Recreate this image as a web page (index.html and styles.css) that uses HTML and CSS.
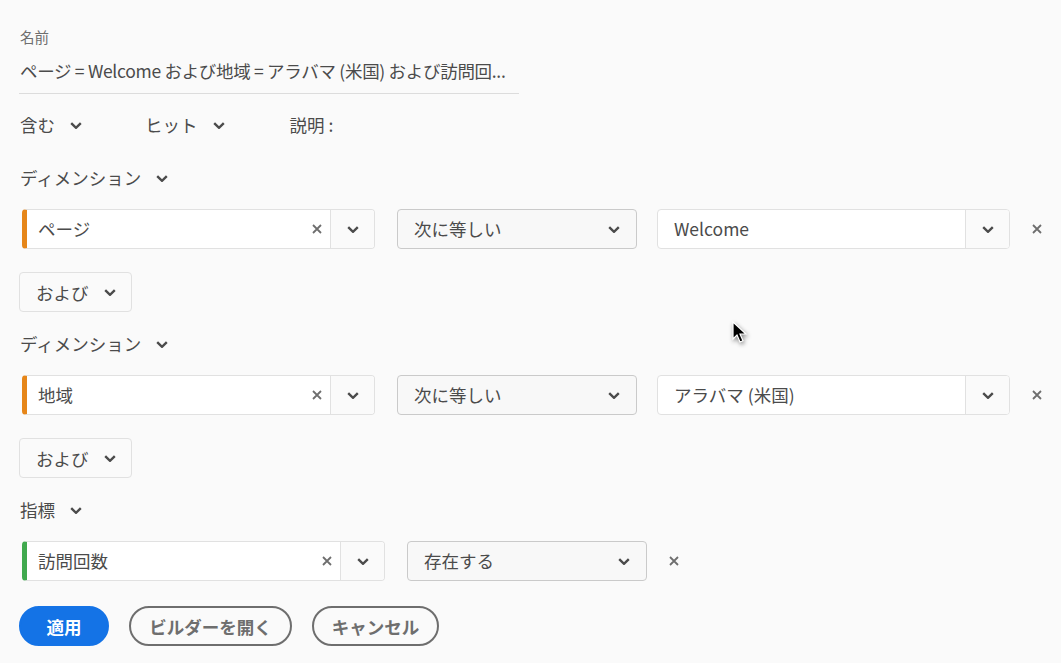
FILE: index.html
```html
<!DOCTYPE html>
<html lang="ja">
<head>
<meta charset="utf-8">
<title>Segment</title>
<link rel="stylesheet" href="styles.css">
</head>
<body>
<div class="panel">
  <div class="name-label">名前</div>
  <div class="name-value">ページ = Welcome および地域 = アラバマ (米国) および訪問回...</div>

  <div class="options">
    <div class="opt">含む<svg class="chev" viewBox="0 0 12 7"><path d="M1.2 1.2l4.8 4.6 4.8-4.6"/></svg></div>
    <div class="opt">ヒット<svg class="chev" viewBox="0 0 12 7"><path d="M1.2 1.2l4.8 4.6 4.8-4.6"/></svg></div>
    <div class="opt desc">説明 :</div>
  </div>

  <div class="section-head first">ディメンション<svg class="chev" viewBox="0 0 12 7"><path d="M1.2 1.2l4.8 4.6 4.8-4.6"/></svg></div>
  <div class="rule-row">
    <div class="combo orange">
      <span class="combo-text">ページ</span>
      <svg class="clear" viewBox="0 0 10 10"><path d="M1 1l8 8M9 1l-8 8"/></svg>
      <span class="combo-btn"><svg class="chev" viewBox="0 0 12 7"><path d="M1.2 1.2l4.8 4.6 4.8-4.6"/></svg></span>
    </div>
    <div class="select"><span>次に等しい</span><svg class="chev" viewBox="0 0 12 7"><path d="M1.2 1.2l4.8 4.6 4.8-4.6"/></svg></div>
    <div class="combo value">
      <span class="combo-text">Welcome</span>
      <span class="combo-btn"><svg class="chev" viewBox="0 0 12 7"><path d="M1.2 1.2l4.8 4.6 4.8-4.6"/></svg></span>
    </div>
    <svg class="remove" viewBox="0 0 10 10"><path d="M1 1l8 8M9 1l-8 8"/></svg>
  </div>

  <div class="and-btn">および<svg class="chev" viewBox="0 0 12 7"><path d="M1.2 1.2l4.8 4.6 4.8-4.6"/></svg></div>

  <div class="section-head">ディメンション<svg class="chev" viewBox="0 0 12 7"><path d="M1.2 1.2l4.8 4.6 4.8-4.6"/></svg></div>
  <div class="rule-row">
    <div class="combo orange">
      <span class="combo-text">地域</span>
      <svg class="clear" viewBox="0 0 10 10"><path d="M1 1l8 8M9 1l-8 8"/></svg>
      <span class="combo-btn"><svg class="chev" viewBox="0 0 12 7"><path d="M1.2 1.2l4.8 4.6 4.8-4.6"/></svg></span>
    </div>
    <div class="select"><span>次に等しい</span><svg class="chev" viewBox="0 0 12 7"><path d="M1.2 1.2l4.8 4.6 4.8-4.6"/></svg></div>
    <div class="combo value">
      <span class="combo-text">アラバマ (米国)</span>
      <span class="combo-btn"><svg class="chev" viewBox="0 0 12 7"><path d="M1.2 1.2l4.8 4.6 4.8-4.6"/></svg></span>
    </div>
    <svg class="remove" viewBox="0 0 10 10"><path d="M1 1l8 8M9 1l-8 8"/></svg>
  </div>

  <div class="and-btn">および<svg class="chev" viewBox="0 0 12 7"><path d="M1.2 1.2l4.8 4.6 4.8-4.6"/></svg></div>

  <div class="section-head">指標<svg class="chev" viewBox="0 0 12 7"><path d="M1.2 1.2l4.8 4.6 4.8-4.6"/></svg></div>
  <div class="rule-row">
    <div class="combo green wide">
      <span class="combo-text">訪問回数</span>
      <svg class="clear" viewBox="0 0 10 10"><path d="M1 1l8 8M9 1l-8 8"/></svg>
      <span class="combo-btn"><svg class="chev" viewBox="0 0 12 7"><path d="M1.2 1.2l4.8 4.6 4.8-4.6"/></svg></span>
    </div>
    <div class="select"><span>存在する</span><svg class="chev" viewBox="0 0 12 7"><path d="M1.2 1.2l4.8 4.6 4.8-4.6"/></svg></div>
    <svg class="remove" viewBox="0 0 10 10"><path d="M1 1l8 8M9 1l-8 8"/></svg>
  </div>

  <div class="actions">
    <button class="btn primary">適用</button>
    <button class="btn secondary builder">ビルダーを開く</button>
    <button class="btn secondary cancel">キャンセル</button>
  </div>
</div>

<svg class="cursor" viewBox="0 0 16 24" width="16" height="24"><path d="M1 1v17l4-4 3 7 3-1.3-3-6.7h6z"/></svg>
</body>
</html>
```

FILE: styles.css
```css
html, body {
  margin: 0;
  padding: 0;
  background: #fafafa;
}
body {
  font-family: "Noto Sans CJK JP", "Noto Sans", sans-serif;
  color: #4b4b4b;
  position: relative;
  width: 1061px;
  height: 663px;
  overflow: hidden;
}
.panel {
  padding: 27px 0 0 19px;
}
.name-label {
  font-size: 14.5px;
  line-height: 20px;
  color: #6e6e6e;
  padding-left: 1px;
}
.name-value {
  font-size: 17.5px;
  line-height: 24px;
  margin-top: 12px;
  width: 499px;
  padding: 0 0 10px 1px;
  border-bottom: 1px solid #dcdcdc;
  white-space: nowrap;
  letter-spacing: -0.3px;
}
.chev {
  width: 12px;
  height: 7px;
  fill: none;
  stroke: #4b4b4b;
  stroke-width: 2.4;
  flex: none;
}
.options {
  display: flex;
  align-items: center;
  margin-top: 19px;
  padding-left: 1px;
  font-size: 17.5px;
  line-height: 24px;
}
.opt {
  display: flex;
  align-items: center;
  margin-right: 63px;
}
.opt .chev {
  margin-left: 15px;
}
.opt.desc {
  margin-left: 2px;
}
.section-head {
  display: flex;
  align-items: center;
  font-size: 17.5px;
  line-height: 24px;
  padding-left: 1px;
  margin-top: 20px;
}
.section-head.first {
  margin-top: 29px;
}
.section-head .chev {
  margin-left: 15px;
}
.rule-row {
  display: flex;
  align-items: center;
  margin-top: 19px;
  margin-left: 3px;
  height: 40px;
}
.combo {
  display: flex;
  align-items: stretch;
  width: 353px;
  height: 40px;
  box-sizing: border-box;
  background: #fff;
  border: 1px solid #e1e1e1;
  border-radius: 4px;
  font-size: 17.5px;
}
.combo.wide {
  width: 363px;
}
.combo.value {
  margin-left: 20px;
}
.combo.orange {
  border-left: 5px solid #e68619;
}
.combo.green {
  border-left: 5px solid #40a94e;
}
.combo-text {
  flex: 1;
  display: flex;
  align-items: center;
  padding-left: 11px;
  white-space: nowrap;
  margin-top: -2px;
}
.combo.value .combo-text {
  padding-left: 16px;
}
.clear {
  width: 10px;
  height: 10px;
  align-self: center;
  fill: none;
  stroke: #6e6e6e;
  stroke-width: 1.8;
  margin-right: 8px;
}
.combo-btn {
  width: 43px;
  display: flex;
  align-items: center;
  justify-content: center;
  border-left: 1px solid #e1e1e1;
  background: #fafafa;
  border-radius: 0 3px 3px 0;
}
.select {
  display: flex;
  align-items: center;
  justify-content: space-between;
  width: 240px;
  height: 40px;
  box-sizing: border-box;
  margin-left: 22px;
  padding: 0 16px 0 16px;
  background: #f8f8f8;
  border: 1px solid #cacaca;
  border-radius: 4px;
  font-size: 17.5px;
}
.select span {
  margin-top: -2px;
}
.remove {
  width: 10px;
  height: 10px;
  fill: none;
  stroke: #6e6e6e;
  stroke-width: 1.8;
  margin-left: 22px;
}
.and-btn {
  display: flex;
  align-items: center;
  width: 113px;
  height: 40px;
  box-sizing: border-box;
  margin-top: 23px;
  padding: 0 0 0 16px;
  background: #fafafa;
  border: 1px solid #e1e1e1;
  border-radius: 4px;
  font-size: 17.5px;
}
.and-btn .chev {
  margin-left: 15px;
}
.actions {
  display: flex;
  gap: 20px;
  margin-top: 25px;
}
.btn {
  height: 40px;
  box-sizing: border-box;
  border-radius: 20px;
  font-family: "Noto Sans CJK JP", "Noto Sans", sans-serif;
  font-size: 17.5px;
  font-weight: bold;
  padding: 0;
  cursor: pointer;
}
.btn.primary {
  width: 90px;
  background: #1473e6;
  border: 2px solid #1473e6;
  color: #fff;
}
.btn.secondary {
  background: transparent;
  border: 2px solid #6e6e6e;
  color: #6e6e6e;
}
.btn.builder {
  width: 163px;
}
.btn.cancel {
  width: 127px;
}
.cursor {
  position: absolute;
  left: 732px;
  top: 321px;
  fill: #000;
  stroke: #fff;
  stroke-width: 1.2;
  filter: blur(0.6px) drop-shadow(1px 2px 2px rgba(0,0,0,0.45));
}
```
